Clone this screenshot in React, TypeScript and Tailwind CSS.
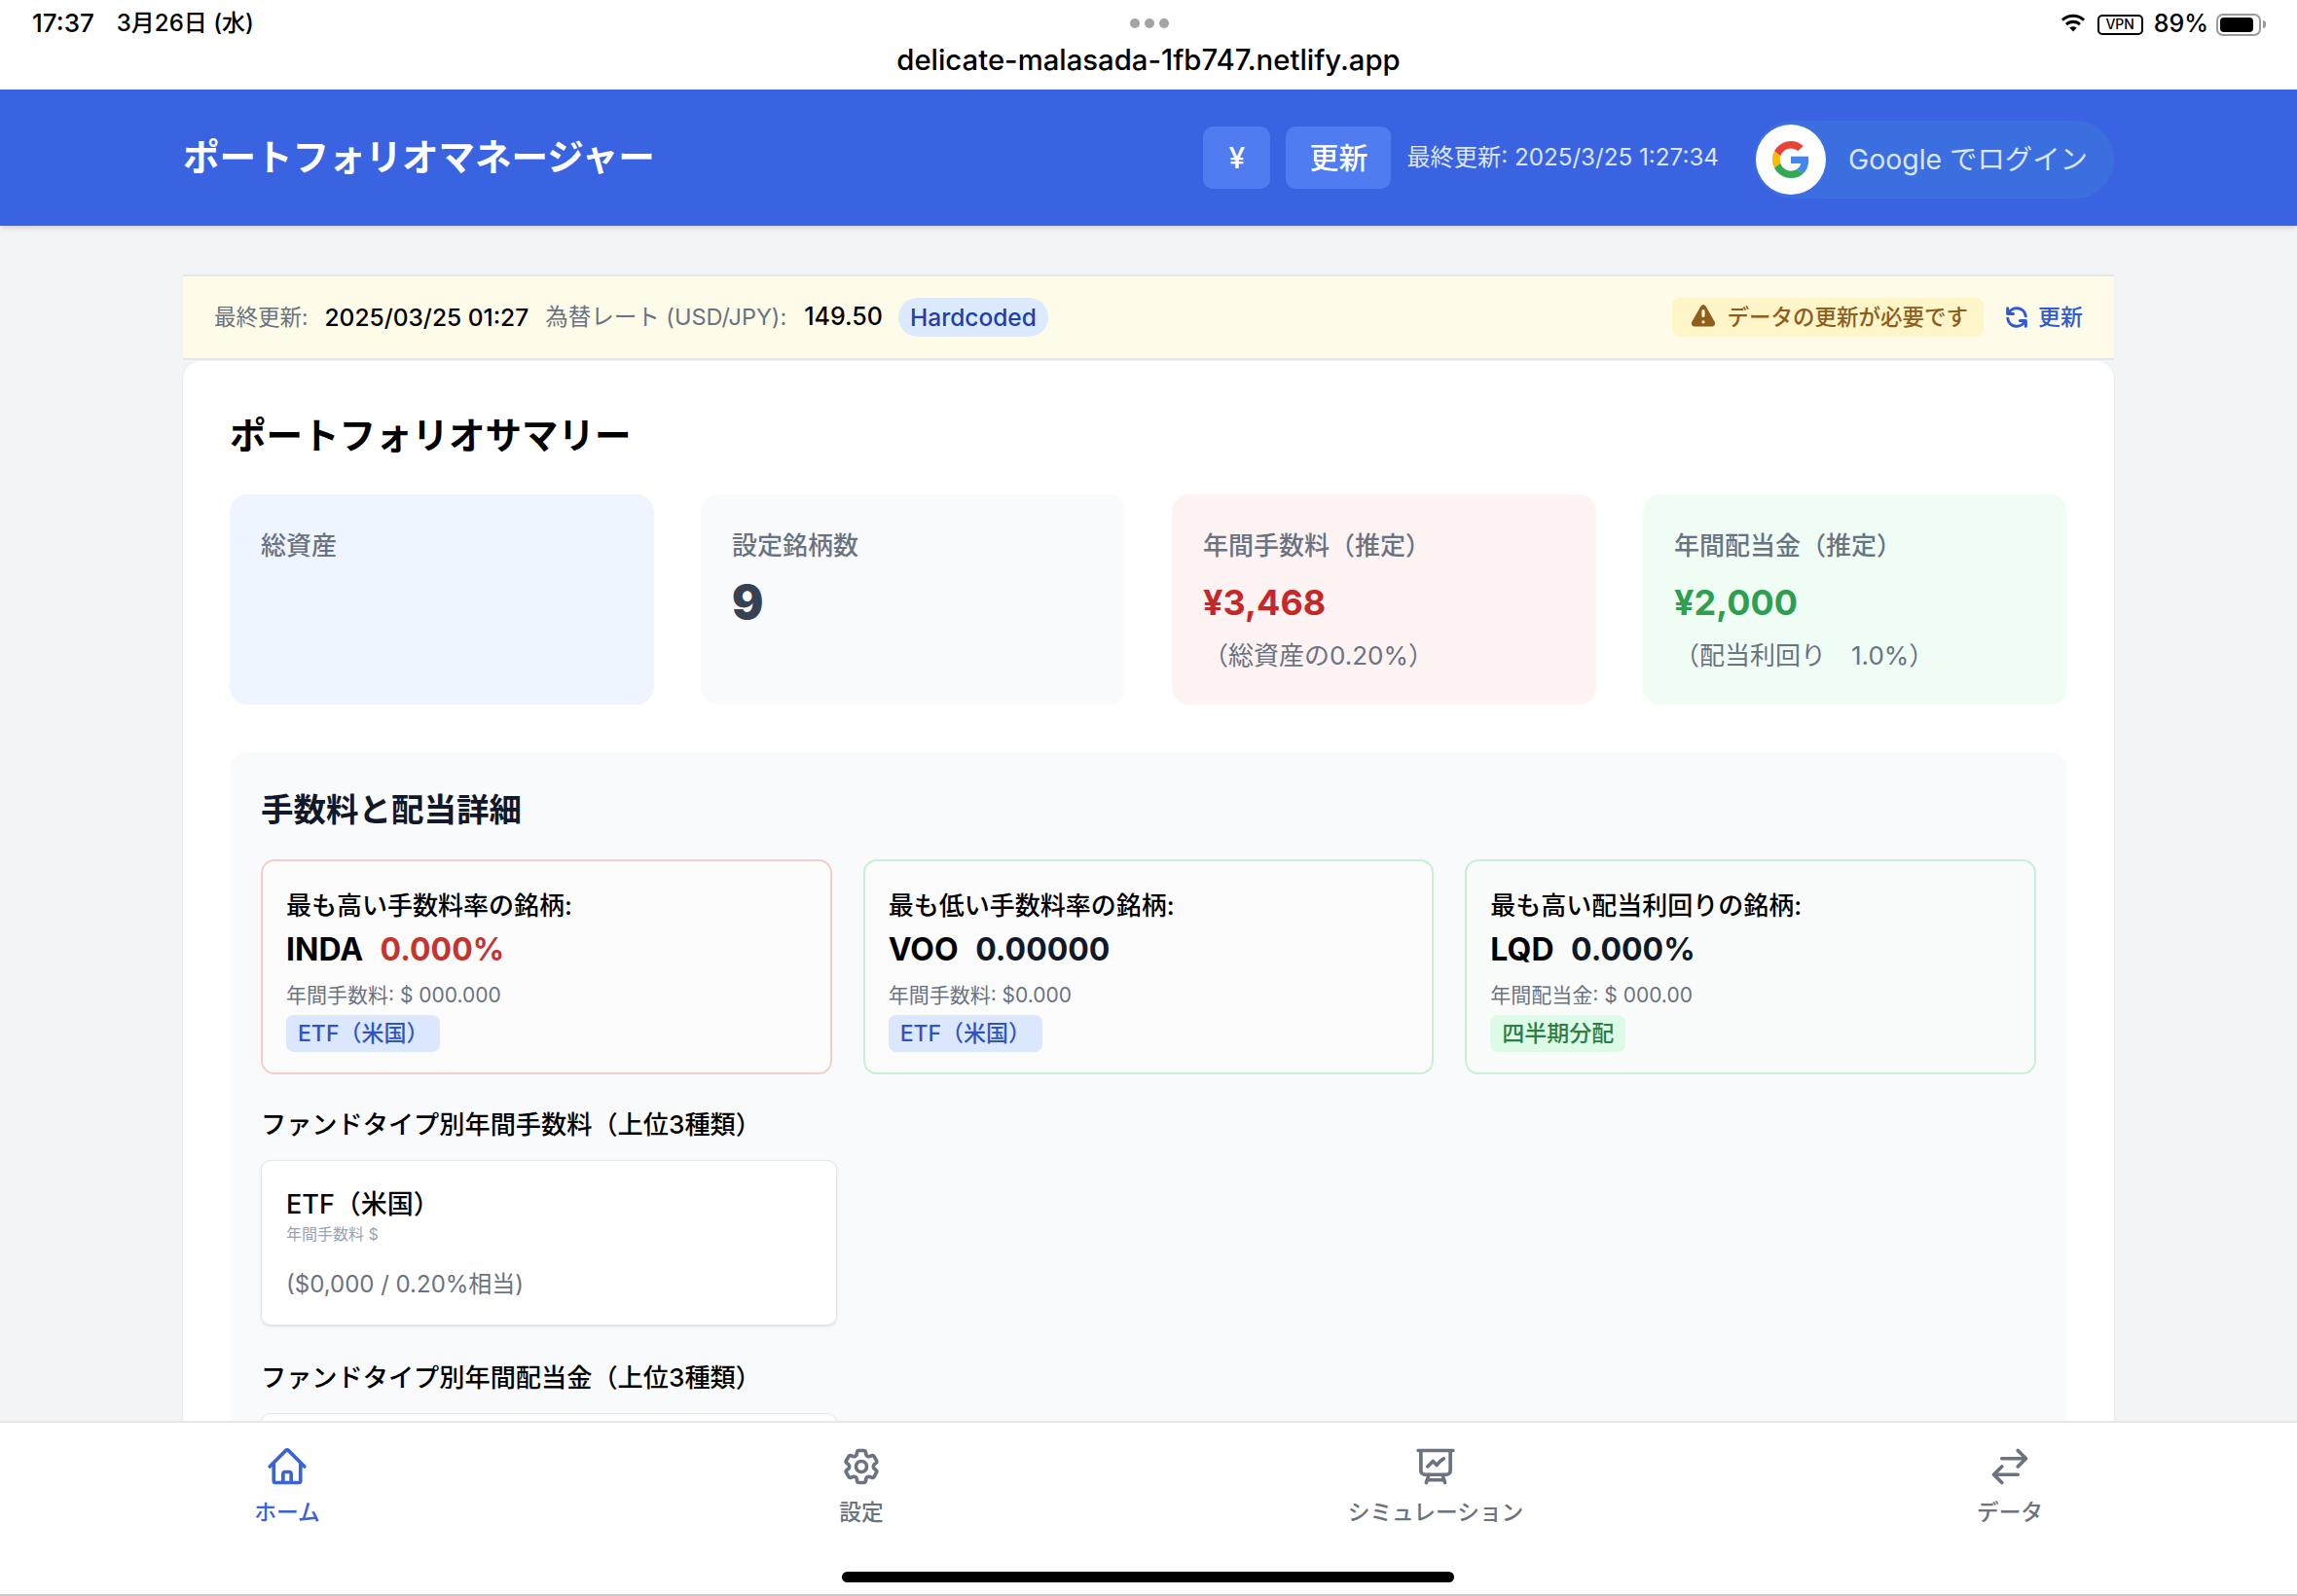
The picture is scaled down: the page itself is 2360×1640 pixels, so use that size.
import { ReactNode } from "react";

const jp = "font-['Inter','Noto_Sans_CJK_JP',sans-serif]";

function Outline({ d, className, width = 2 }: { d: string; className?: string; width?: number }) {
  return (
    <svg viewBox="0 0 24 24" fill="none" stroke="currentColor" strokeWidth={width} strokeLinecap="round" strokeLinejoin="round" className={className}>
      <path d={d} />
    </svg>
  );
}

const homeIcon = "m2.25 12 8.954-8.955c.44-.439 1.152-.439 1.591 0L21.75 12M4.5 9.75v10.125c0 .621.504 1.125 1.125 1.125H9.75v-4.875c0-.621.504-1.125 1.125-1.125h2.25c.621 0 1.125.504 1.125 1.125V21h4.125c.621 0 1.125-.504 1.125-1.125V9.75M8.25 21h8.25";
const cogIcon = "M9.594 3.94c.09-.542.56-.94 1.11-.94h2.593c.55 0 1.02.398 1.11.94l.213 1.281c.063.374.313.686.645.87.074.04.147.083.22.127.325.196.72.257 1.075.124l1.217-.456a1.125 1.125 0 0 1 1.37.49l1.296 2.247a1.125 1.125 0 0 1-.26 1.431l-1.003.827c-.293.241-.438.613-.43.992a7.723 7.723 0 0 1 0 .255c-.008.378.137.75.43.991l1.004.827c.424.35.534.955.26 1.43l-1.298 2.247a1.125 1.125 0 0 1-1.369.491l-1.217-.456c-.355-.133-.75-.072-1.076.124a6.47 6.47 0 0 1-.22.128c-.331.183-.581.495-.644.869l-.213 1.281c-.09.543-.56.94-1.11.94h-2.594c-.55 0-1.019-.398-1.11-.94l-.213-1.281c-.062-.374-.312-.686-.644-.87a6.52 6.52 0 0 1-.22-.127c-.325-.196-.72-.257-1.076-.124l-1.217.456a1.125 1.125 0 0 1-1.369-.49l-1.297-2.247a1.125 1.125 0 0 1 .26-1.431l1.004-.827c.292-.24.437-.613.43-.991a6.932 6.932 0 0 1 0-.255c.007-.38-.138-.751-.43-.992l-1.004-.827a1.125 1.125 0 0 1-.26-1.43l1.297-2.247a1.125 1.125 0 0 1 1.37-.491l1.216.456c.356.133.751.072 1.076-.124.072-.044.146-.086.22-.128.332-.183.582-.495.644-.869l.214-1.28ZM15 12a3 3 0 1 1-6 0 3 3 0 0 1 6 0Z";
const chartIcon = "M3.75 3v11.25A2.25 2.25 0 0 0 6 16.5h2.25M3.75 3h-1.5m1.5 0h16.5m0 0h1.5m-1.5 0v11.25A2.25 2.25 0 0 1 18 16.5h-2.25m-7.5 0h7.5m-7.5 0-1 3m8.5-3 1 3m0 0 .5 1.5m-.5-1.5h-9.5m0 0-.5 1.5m.75-9 3-3 2.148 2.148A12.061 12.061 0 0 1 16.5 7.605";
const arrowsIcon = "M7.5 21 3 16.5m0 0L7.5 12M3 16.5h13.5m0-13.5L21 7.5m0 0L16.5 12M21 7.5H7.5";
const refreshIcon = "M4 4v5h.582m15.356 2A8.001 8.001 0 004.582 9m0 0H9m11 11v-5h-.581m0 0a8.003 8.003 0 01-15.357-2m15.357 2H15";

function StatusBar() {
  return (
    <div className="h-[92px] shrink-0 bg-white text-black">
      <div className="grid h-[50px] grid-cols-3 items-center pl-[33px] pr-[32px]">
        <div className="mb-[3px] flex items-center gap-[23px] font-medium">
          <span className="text-[26px]">17:37</span>
          <span className="text-[24px]">3月26日 (水)</span>
        </div>
        <div className="mb-[3px] flex justify-center gap-[5px]">
          <span className="size-[10px] rounded-full bg-[#a3a3a3]" />
          <span className="size-[10px] rounded-full bg-[#a3a3a3]" />
          <span className="size-[10px] rounded-full bg-[#a3a3a3]" />
        </div>
        <div className="flex items-center justify-end gap-[11px]">
          <svg viewBox="0 0 26 20" className="h-[22px] w-[28px]" fill="black">
            <path d="M13 3.2c3.6 0 6.9 1.400 9.400 3.700l1.800-2C21.200 2.100 17.300.4 13 .4S4.800 2.100 1.800 4.900l1.800 2C6.100 4.600 9.400 3.200 13 3.200z" />
            <path d="M13 9c2.100 0 4 .8 5.500 2.100l1.900-2.100C18.400 7.200 15.800 6.100 13 6.100S7.600 7.200 5.600 9l1.900 2.100C9 9.800 10.900 9 13 9z" />
            <path d="M13 12c-1.300 0-2.500.5-3.400 1.300L13 17l3.400-3.700C15.500 12.500 14.300 12 13 12z" />
          </svg>
          <span className="flex h-[21px] w-[47px] items-center justify-center rounded-[5px] border-2 border-black text-[14px] font-medium leading-none">VPN</span>
          <span className="text-[25px] font-medium">89%</span>
          <div className="-ml-[3px] flex items-center gap-[2px]">
            <div className="flex h-[23px] w-[46px] items-center rounded-[7px] border-2 border-[#9a9a9a] p-[2px]">
              <div className="h-full w-[89%] rounded-[4px] bg-black" />
            </div>
            <div className="h-[8px] w-[3px] rounded-r-full bg-[#9a9a9a]" />
          </div>
        </div>
      </div>
      <div className="text-center text-[29.3px] font-medium leading-[24px]">delicate-malasada-1fb747.netlify.app</div>
    </div>
  );
}

function Header() {
  return (
    <header className="relative z-10 flex h-[140px] shrink-0 items-center justify-between bg-[#3963e0] pl-[188px] pr-[188px] shadow-md">
      <h1 className="text-[37.5px] font-bold text-white">ポートフォリオマネージャー</h1>
      <div className="flex items-center">
        <button className="flex h-[64px] w-[69px] items-center justify-center rounded-[10px] bg-[#4f7cf0] text-[30px] font-medium text-white">¥</button>
        <button className="ml-[16px] flex h-[64px] w-[108px] items-center justify-center rounded-[10px] bg-[#4f7cf0] text-[30px] font-medium text-white">更新</button>
        <span className="ml-[16px] text-[24.2px] text-[#dbe6fe]">最終更新: 2025/3/25 1:27:34</span>
        <div className="ml-[36px] mt-[4px] flex h-[80px] w-[370px] items-center rounded-full bg-[#3b6fe0] pl-[2px]">
          <div className="flex size-[72px] items-center justify-center rounded-full bg-white">
            <svg viewBox="0 0 48 48" className="size-[38px]">
              <path fill="#EA4335" d="M24 9.500c3.540 0 6.710 1.220 9.210 3.600l6.850-6.850C35.900 2.380 30.470 0 24 0 14.620 0 6.510 5.380 2.560 13.220l7.980 6.190C12.430 13.720 17.740 9.500 24 9.500z" />
              <path fill="#4285F4" d="M46.980 24.550c0-1.570-.15-3.090-.38-4.550H24v9.020h12.940c-.58 2.960-2.260 5.480-4.780 7.180l7.730 6c4.510-4.180 7.090-10.360 7.090-17.650z" />
              <path fill="#FBBC05" d="M10.530 28.590c-.48-1.450-.76-2.990-.76-4.590s.27-3.140.76-4.590l-7.980-6.190C.92 16.460 0 20.120 0 24c0 3.880.92 7.540 2.560 10.780l7.970-6.190z" />
              <path fill="#34A853" d="M24 48c6.480 0 11.930-2.130 15.890-5.810l-7.730-6c-2.150 1.450-4.920 2.300-8.160 2.300-6.260 0-11.570-4.220-13.470-9.910l-7.980 6.190C6.510 42.620 14.620 48 24 48z" />
            </svg>
          </div>
          <span className="ml-[23px] text-[28.4px] text-[#dbe6fe]">Google でログイン</span>
        </div>
      </div>
    </header>
  );
}

function InfoBar() {
  return (
    <div className="flex h-[88px] items-center justify-between border-y-2 border-[#e5e7eb] bg-[#fefce8] pl-[32px] pr-[32px]">
      <div className="flex items-center">
        <span className="text-[22.5px] text-[#6b7280]">最終更新:</span>
        <span className="ml-[17px] text-[24.5px] font-medium text-black">2025/03/25 01:27</span>
        <span className="ml-[17px] text-[23.5px] text-[#6b7280]">為替レート (USD/JPY):</span>
        <span className="ml-[18px] text-[25px] font-medium text-black">149.50</span>
        <span className="ml-[16px] flex h-[40px] items-center rounded-full bg-[#dbeafe] px-[12px] text-[24.5px] font-medium text-[#1e40af]">Hardcoded</span>
      </div>
      <div className="flex items-center text-[23px]">
        <span className="flex h-[40px] items-center gap-[8px] rounded-[8px] bg-[#fef6c8] px-[16px] text-[22.5px] font-medium text-[#8f5e1d]">
          <svg viewBox="0 0 20 20" className="size-[32px]" fill="currentColor">
            <path fillRule="evenodd" clipRule="evenodd" d="M8.257 3.099c.765-1.36 2.722-1.36 3.486 0l5.58 9.92c.75 1.334-.213 2.98-1.742 2.98H4.42c-1.53 0-2.493-1.646-1.743-2.98l5.58-9.92zM11 13a1 1 0 11-2 0 1 1 0 012 0zm-1-8a1 1 0 00-1 1v3a1 1 0 002 0V6a1 1 0 00-1-1z" />
          </svg>
          データの更新が必要です
        </span>
        <span className="ml-[20px] flex items-center gap-[8px] font-medium text-[#2d5bd8]">
          <Outline d={refreshIcon} className="size-[28px]" width={2.6} />
          更新
        </span>
      </div>
    </div>
  );
}

function StatCard({ label, className, children }: { label: string; className: string; children?: ReactNode }) {
  return (
    <div className={`h-[216px] rounded-[18px] px-[32px] pt-[34px] ${className}`}>
      <p className="text-[26px] font-medium leading-[38px] text-[#6b7280]">{label}</p>
      {children}
    </div>
  );
}

function Highlight({ title, code, rate, rateColor, sub, tag, tagClass, border, bg }: { title: string; code: string; rate: string; rateColor: string; sub: string; tag: string; tagClass: string; border: string; bg: string }) {
  return (
    <div className={`h-[221px] rounded-[14px] border-2 px-[24px] pt-[28px] ${border} ${bg}`}>
      <p className="text-[26px] font-medium leading-[36px] text-black">{title}</p>
      <p className="mt-[5px] text-[32px] font-bold leading-[44px] text-black">
        {code} <span className={`ml-[10px] ${rateColor}`}>{rate}</span>
      </p>
      <p className="mt-[10px] text-[21px] leading-[30px] text-[#6b7280]">{sub}</p>
      <span className={`mt-[5px] inline-flex h-[38px] items-center rounded-[8px] px-[12px] text-[23px] font-medium ${tagClass}`}>{tag}</span>
    </div>
  );
}

function NavItem({ icon, label, active }: { icon: string; label: string; active?: boolean }) {
  return (
    <div className={`flex flex-col items-center pt-[23px] ${active ? "text-[#3a63d8]" : "text-[#6b7280]"}`}>
      <Outline d={icon} className="size-[44px]" />
      <span className="mt-[9px] text-[22.7px] font-medium leading-[32px]">{label}</span>
    </div>
  );
}

export default function App() {
  return (
    <div className={`flex h-[1640px] w-[2360px] flex-col overflow-hidden bg-[#f3f4f6] ${jp}`}>
      <StatusBar />
      <Header />
      <main className="min-h-0 flex-1 overflow-hidden px-[188px] pt-[50px]">
        <InfoBar />
        <section className="mt-px rounded-[18px] bg-white px-[48px] pt-[49px] shadow-sm">
          <h2 className="text-[37.5px] font-bold leading-[56px] text-black">ポートフォリオサマリー</h2>
          <div className="mt-[32px] grid grid-cols-4 gap-[48px]">
            <StatCard label="総資産" className="bg-[#eff5fe]" />
            <StatCard label="設定銘柄数" className="bg-[#f9fafb]">
              <p className="mt-[9px] text-[48px] font-black leading-[60px] text-[#374151]">9</p>
            </StatCard>
            <StatCard label="年間手数料（推定）" className="bg-[#fdf3f3]">
              <p className="mt-[9px] text-[36px] font-bold leading-[60px] text-[#c62828]">¥3,468</p>
              <p className="mt-[7px] text-[26px] leading-[36px] text-[#6b7280]">（総資産の0.20%）</p>
            </StatCard>
            <StatCard label="年間配当金（推定）" className="bg-[#f0fdf4]">
              <p className="mt-[9px] text-[36px] font-bold leading-[60px] text-[#2f9e50]">¥2,000</p>
              <p className="mt-[7px] text-[26px] leading-[36px] text-[#6b7280]">（配当利回り　1.0%）</p>
            </StatCard>
          </div>
          <div className="mt-[49px] rounded-[18px] bg-[#f9fafb] px-[32px] pt-[34px] pb-[40px]">
            <h3 className="text-[33.5px] font-bold leading-[50px] text-[#111827]">手数料と配当詳細</h3>
            <div className="mt-[26px] grid grid-cols-3 gap-[32px]">
              <Highlight title="最も高い手数料率の銘柄:" code="INDA" rate="0.000%" rateColor="text-[#c5342e]" sub="年間手数料: $ 000.000" tag="ETF（米国）" tagClass="bg-[#dbe7fc] text-[#2f54c0]" border="border-[#f5cdcd]" bg="bg-[#fcfcfd]" />
              <Highlight title="最も低い手数料率の銘柄:" code="VOO" rate="0.00000" rateColor="text-[#111827]" sub="年間手数料: $0.000" tag="ETF（米国）" tagClass="bg-[#dbe7fc] text-[#2f54c0]" border="border-[#c9f0d6]" bg="bg-[#fcfcfd]" />
              <Highlight title="最も高い配当利回りの銘柄:" code="LQD" rate="0.000%" rateColor="text-[#111827]" sub="年間配当金: $ 000.00" tag="四半期分配" tagClass="bg-[#dcfce7] text-[#2e7d46]" border="border-[#c9f0d6]" bg="bg-[#fafcfc]" />
            </div>
            <h4 className="mt-[34px] text-[26.2px] font-medium leading-[36px] text-black">ファンドタイプ別年間手数料（上位3種類）</h4>
            <div className="mt-[18px] h-[170px] w-[592px] rounded-[10px] border-[1.5px] border-[#e5e7eb] bg-white px-[25px] pt-[27px] shadow-sm">
              <p className="text-[27px] font-medium leading-[36px] text-black">ETF（米国）</p>
              <p className="text-[16px] leading-[24px] text-[#9ca3af]">年間手数料 $</p>
              <p className="mt-[23px] text-[24px] leading-[34px] text-[#6b7280]">($0,000 / 0.20%相当)</p>
            </div>
            <h4 className="mt-[36px] text-[26.2px] font-medium leading-[36px] text-black">ファンドタイプ別年間配当金（上位3種類）</h4>
            <div className="mt-[18px] h-[170px] w-[592px] rounded-[10px] border-[1.5px] border-[#e5e7eb] bg-white" />
          </div>
        </section>
      </main>
      <nav className="relative z-10 h-[180px] shrink-0 border-t-2 border-b-2 border-t-[#e5e7eb] border-b-[#cccccc] bg-white">
        <div className="grid grid-cols-4">
          <NavItem icon={homeIcon} label="ホーム" active />
          <NavItem icon={cogIcon} label="設定" />
          <NavItem icon={chartIcon} label="シミュレーション" />
          <NavItem icon={arrowsIcon} label="データ" />
        </div>
        <div className="absolute bottom-[12px] left-[865px] h-[11px] w-[629px] rounded-full bg-black" />
      </nav>
    </div>
  );
}
